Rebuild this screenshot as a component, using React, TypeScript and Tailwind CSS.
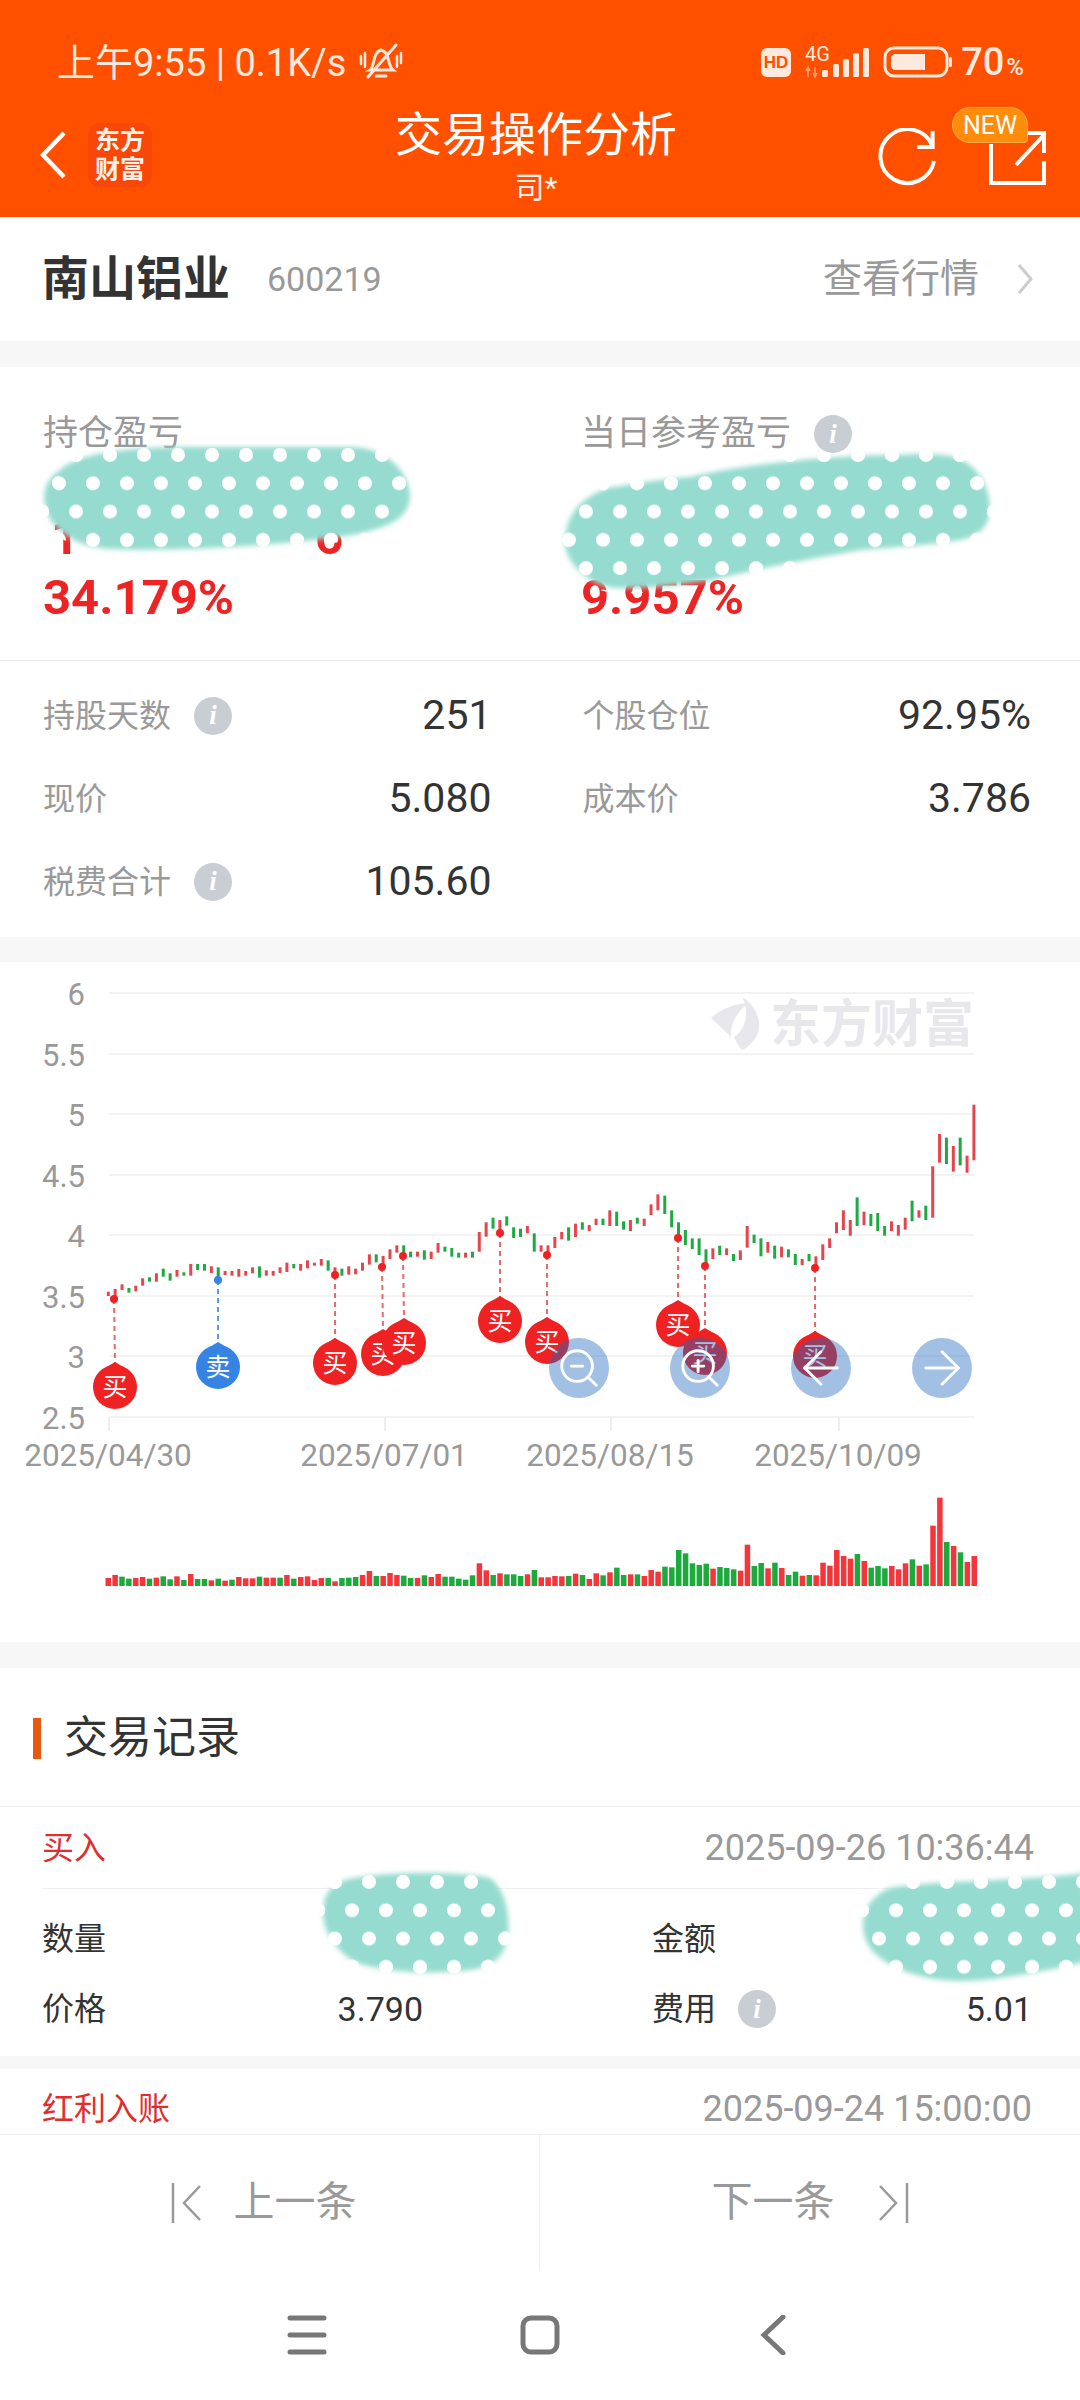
import { ArrowLeft, ArrowRight, ZoomIn, ZoomOut } from 'lucide-react';

type Candle = { up: boolean; top: number; bottom: number };

// candle rows read off the chart: r/g + top-bottom, relative to a base y
const parseCandles = (raw: string, base: number): Candle[] =>
  raw.trim().split(/\s+/).map(item => {
    const [top, bottom] = item.slice(1).split('-').map(Number);
    return { up: item[0] === 'r', top: base + top / 3, bottom: base + bottom / 3 };
  });

const candles: Candle[] = [
  ...parseCandles(
    `r305-318 r297-325 r283-300 g294-308 r287-304 r265-287 g262-275 r250-275 g236-260 g250-272
     r240-260 g247-257 r222-257 g222-240 g222-242 r229-249 g232-262 r243-255 r243-257 r237-260
     r243-257 r232-250 g229-263 r241-257 r243-257 r232-249 r218-246 g222-235 r222-242 r211-235
     r218-227 r207-227 g211-242 r232-262 g236-257 r229-254 r236-253 r218-242 r193-224 g193-217`,
    1190,
  ),
  ...parseCandles(
    `r258-290 r238-267 r226-248 g226-258 g245-262 r245-260 g241-269 r245-267 r219-248 g230-245
     g234-260 g248-263 r248-263 g245-263 r186-245 r157-200 g143-176 r150-190 g139-167 g172-204
     g176-201 r168-190 g190-245 r226-245 r226-255 r201-234 r186-208 g172-212 r161-201 g157-179
     r165-183 r146-165 g146-165 r121-168 g125-168 g154-179 r150-183 g143-161 r146-168 r103-135
     r73-121 g77-132 g121-172 g157-200`,
    1170,
  ),
  ...parseCandles(
    `g420-465 g445-477 g445-495 g478-525 r475-507 g467-495 r475-495 g492-513 r481-510 r408-473
     g434-459 g445-499 r456-488 g467-506 r470-502 g478-502 g492-525 r507-525 g492-514 r499-535
     r463-510 r445-474 r397-430 r361-420 r390-437 g322-408 r365-405 g372-408 g369-423 g408-437
     r394-423 r405-437 r383-419 g332-394 r361-383 g347-390 r229-383 r132-218 g143-222 r168-245
     g143-226 r197-248 r44-211`,
    1090,
  ),
];

const volumes = `r354 r345 g350 g356 r354 r351 g356 r353 g349 g358 r349 g360 r342 g357 g357 r361 g356 r362 g359 r351
  r355 r355 g350 r353 r353 g353 r345 g356 r351 r349 r360 r354 g354 r364 g354 g353 g351 r345 r333 g348
  r348 r339 r345 g347 g354 r354 g346 r351 r342 g350 g350 g356 g359 g346 r310 r331 g345 r340 g343 g343
  g348 r343 g330 r352 r352 r348 r349 g348 r341 g345 r357 r340 g346 r337 g323 g345 r343 g343 r348 r330
  r335 g320 g322 g270 g280 g310 g315 g311 r326 g321 g324 g328 r332 r254 g318 g309 r325 g308 r324 g345
  g335 r347 g345 r346 r308 r317 r270 r288 r296 g282 r303 g323 g318 g325 r318 r328 r310 g298 r317 g313
  r197 r113 g246 r258 g277 r306 r288`
  .trim()
  .split(/\s+/)
  .map(item => ({ up: item[0] === 'r', top: 1460 + Number(item.slice(1)) / 3 }));

const gridLines = [
  { label: '6', y: 993 },
  { label: '5.5', y: 1054 },
  { label: '5', y: 1114 },
  { label: '4.5', y: 1175 },
  { label: '4', y: 1235 },
  { label: '3.5', y: 1296 },
  { label: '3', y: 1356 },
  { label: '2.5', y: 1417 },
];

const dateTicks = [
  { label: '2025/04/30', x: 108 },
  { label: '2025/07/01', x: 384 },
  { label: '2025/08/15', x: 610 },
  { label: '2025/10/09', x: 838 },
];

const trades = [
  { x: 114, dotY: 1299, ballX: 115, ballY: 1387, sell: false },
  { x: 218, dotY: 1280, ballX: 218, ballY: 1367, sell: true },
  { x: 335, dotY: 1275, ballX: 335, ballY: 1363, sell: false },
  { x: 382, dotY: 1267, ballX: 383, ballY: 1354, sell: false },
  { x: 403, dotY: 1256, ballX: 404, ballY: 1343, sell: false },
  { x: 500, dotY: 1233, ballX: 500, ballY: 1321, sell: false },
  { x: 547, dotY: 1255, ballX: 547, ballY: 1342, sell: false },
  { x: 678, dotY: 1238, ballX: 678, ballY: 1325, sell: false },
  { x: 705, dotY: 1266, ballX: 705, ballY: 1353, sell: false },
  { x: 815, dotY: 1268, ballX: 815, ballY: 1356, sell: false },
];

const scribbles = [
  {
    pattern: 'dotsTop',
    d: 'M60 470C80 452 130 447 200 447L350 447C385 447 408 470 410 495C410 520 385 530 340 537C280 545 180 552 110 549C80 547 58 535 48 515C40 495 45 480 60 470Z',
  },
  {
    pattern: 'dotsTop',
    d: 'M607 488C640 483 670 478 690 477C720 470 760 464 793 461C830 457 870 455 897 455C930 453 955 454 965 462C982 472 990 490 990 511C988 528 978 536 960 540C925 546 890 547 862 550C825 556 790 563 759 569C725 578 690 585 655 587C630 589 605 590 593 581C575 570 564 555 565 540C566 520 575 500 607 488Z',
  },
  {
    pattern: 'dotsBottom',
    d: 'M345 1880C380 1871 460 1871 490 1878C507 1890 510 1920 508 1935C506 1955 495 1966 470 1970C430 1975 380 1972 355 1962C335 1950 322 1930 323 1910C324 1895 330 1885 345 1880Z',
  },
  {
    pattern: 'dotsBottom',
    d: 'M890 1888C930 1880 1020 1882 1085 1873L1085 1962C1040 1972 1000 1980 965 1981C920 1982 880 1965 868 1945C858 1925 862 1900 890 1888Z',
  },
];

function InfoDot() {
  return (
    <span className="w-[38px] h-[38px] rounded-full bg-[#C9CDD4] text-white flex items-center justify-center font-['Liberation_Serif',serif] italic font-bold text-[27px] leading-none shrink-0">
      i
    </span>
  );
}

function StatCell({ label, value, info }: { label: string; value: string; info?: boolean }) {
  return (
    <div className="h-[83px] flex items-center justify-between">
      <div className="flex items-center gap-[23px] text-[32px] text-[#999999]">
        {label}
        {info && <InfoDot />}
      </div>
      <span className="text-[41px] text-[#333333]">{value}</span>
    </div>
  );
}

function StatusBar() {
  return (
    <div className="h-[44px] flex items-center justify-between pl-[57px] pr-[56px] text-[#FDE9DE]">
      <div className="flex items-center">
        <span className="text-[38px] leading-none mt-[1px]">上午9:55 | 0.1K/s</span>
        <svg width="46" height="38" viewBox="0 0 46 38" fill="none" stroke="currentColor" strokeWidth="3" strokeLinecap="round" className="ml-[12px]">
          <path d="M12 27C17 24 14 10 23 7C32 9 29 22 35 27Z" />
          <path d="M18 33H28" />
          <path d="M38 2L10 34" />
          <path d="M3 13V21M7 10V24M39 13V24M43 10V20" strokeWidth="2.5" />
        </svg>
      </div>
      <div className="flex items-center">
        <span className="w-[30px] h-[29px] rounded-[6px] bg-[#FDE9DE] text-[#FF5000] text-[17px] font-bold leading-none flex items-center justify-center font-['Liberation_Sans',sans-serif]">
          HD
        </span>
        <svg width="66" height="34" viewBox="0 0 66 34" className="ml-[14px]">
          <text x="0" y="16" fontSize="20" fill="#FDE9DE" fontFamily="Roboto, sans-serif">4G</text>
          <path d="M3 22V32M1 26L3 22L5 26M10 22V32M8 28L10 32L12 28" stroke="#FF9C70" strokeWidth="1.6" fill="none" />
          <g fill="#FDE9DE">
            <rect x="17" y="25" width="6" height="7" rx="1.5" />
            <rect x="28" y="19" width="6" height="13" rx="1.5" />
            <rect x="38" y="14" width="6" height="18" rx="1.5" />
            <rect x="48" y="8" width="6" height="24" rx="1.5" />
            <rect x="58" y="3" width="6" height="29" rx="1.5" />
          </g>
        </svg>
        <svg width="70" height="32" viewBox="0 0 70 32" className="ml-[12px]">
          <rect x="2" y="2" width="62" height="28" rx="9" fill="none" stroke="#FDE9DE" strokeWidth="3" />
          <path d="M13 8H42V24H13C10 24 8 22 8 19V13C8 10 10 8 13 8Z" fill="#FDE9DE" />
          <rect x="66" y="11" width="3" height="10" rx="1.5" fill="#FDE9DE" />
        </svg>
        <span className="text-[38px] leading-none ml-[8px] font-medium">70</span>
        <span className="text-[24px] leading-none ml-[2px] mt-[10px] font-medium">%</span>
      </div>
    </div>
  );
}

function NavBar() {
  return (
    <div className="h-[133px] flex">
      <div className="w-[256px] h-[64px] mt-[39px] pl-[40px] flex items-center gap-[22px]">
        <svg width="26" height="48" viewBox="0 0 26 48" fill="none" stroke="white" strokeWidth="4.5">
          <path d="M24 2L3 24L24 46" />
        </svg>
        <div className="w-[64px] h-[64px] rounded-[12px] bg-[#F7480A] text-[#FFF1E8] text-[25px] font-bold leading-[29px] text-center flex items-center justify-center">
          东方<br />财富
        </div>
      </div>
      <div className="flex-1 pt-[24px] flex flex-col items-center text-white">
        <span className="text-[47px] leading-[54px]">交易操作分析</span>
        <span className="text-[30px] leading-[40px] mt-[6px] text-[#FFF1E8]">司*</span>
      </div>
      <div className="w-[264px] mt-[44px] flex justify-end pr-[33px] gap-[52px]">
        <svg width="60" height="60" viewBox="0 0 60 60" fill="none" stroke="white" strokeWidth="4">
          <path d="M55.6 18.3A27 27 0 1 0 57 33" />
          <path d="M55.6 3V19H40" />
        </svg>
        <div className="relative w-[58px] h-[58px]">
          <svg width="58" height="58" viewBox="0 0 58 58" fill="none" stroke="white" strokeWidth="4" className="mt-[1px]">
            <path d="M2 15V54H55V32" />
            <path d="M27 36L55 6" />
            <path d="M36 4H55V24" />
          </svg>
          <span className="absolute left-[-37px] top-[-21px] w-[76px] h-[36px] rounded-tl-[18px] rounded-tr-[18px] rounded-bl-[18px] rounded-br-[4px] border border-[#FFB04D] bg-[#FF8C0A] text-white text-[25px] leading-none flex items-center justify-center">
            NEW
          </span>
        </div>
      </div>
    </div>
  );
}

function KlineChart() {
  const step = 6.87;
  const volStep = (971.5 - 105.5) / (volumes.length - 1);
  return (
    <svg width="1080" height="680" viewBox="0 962 1080 680" className="block" fontFamily="Roboto, 'Noto Sans CJK SC', sans-serif">
      {gridLines.map(line => (
        <g key={line.label}>
          <rect x="109" y={line.y - 1} width="865" height="2" fill="#F3F3F4" />
          <text x="85" y={line.y + 12} textAnchor="end" fontSize="31" fill="#999999">{line.label}</text>
        </g>
      ))}
      {dateTicks.map(tick => (
        <g key={tick.label}>
          <rect x={tick.x} y="1417" width="2" height="14" fill="#EEEEEE" />
          <text x={tick.x} y="1466" textAnchor="middle" fontSize="31.5" fill="#999999">{tick.label}</text>
        </g>
      ))}

      <g fill="#E8E8EC">
        <path d="M711 1018C722 1008 735 1004 748 1003C738 1012 730 1022 731 1037C722 1028 716 1023 711 1018Z" />
        <path d="M742 997C756 1005 763 1022 757 1035C753 1043 747 1048 742 1050C738 1045 735 1040 734 1037C746 1030 750 1010 742 997Z" />
        <text x="770" y="1042" fontSize="51" fontWeight="700">东方财富</text>
      </g>

      {candles.map((c, i) => (
        <rect
          key={i}
          x={108.3 + i * step - 1.5}
          y={c.top}
          width="3"
          height={c.bottom - c.top}
          fill={c.up ? '#E4464E' : '#1DAA42'}
        />
      ))}

      {trades.map(t => {
        const color = t.sell ? '#3584E4' : '#EE2222';
        return (
          <g key={t.x}>
            <line
              x1={t.x}
              y1={t.dotY}
              x2={t.ballX}
              y2={t.ballY - 24}
              stroke={t.sell ? '#5C9BE8' : '#E96A6A'}
              strokeWidth="2"
              strokeDasharray="5 4"
            />
            <circle cx={t.x} cy={t.dotY} r="4" fill={color} />
            <path d={`M${t.ballX - 10} ${t.ballY - 19}L${t.ballX} ${t.ballY - 25}L${t.ballX + 10} ${t.ballY - 19}Z`} fill={color} />
            <circle cx={t.ballX} cy={t.ballY} r="22" fill={color} />
            <text x={t.ballX} y={t.ballY + 9} textAnchor="middle" fontSize="25" fill="white">
              {t.sell ? '卖' : '买'}
            </text>
          </g>
        );
      })}

      {volumes.map((v, i) => (
        <rect
          key={i}
          x={105.5 + i * volStep}
          y={v.top}
          width="5.5"
          height={1586 - v.top}
          fill={v.up ? '#F4363C' : '#1CAA3C'}
        />
      ))}
    </svg>
  );
}

function ChartButton({ className, children }: { className: string; children: React.ReactNode }) {
  return (
    <div className={`absolute top-[376px] w-[60px] h-[60px] rounded-full bg-[rgba(31,105,188,0.42)] text-white flex items-center justify-center ${className}`}>
      {children}
    </div>
  );
}

function Scribbles() {
  return (
    <svg width="1080" height="2400" viewBox="0 0 1080 2400" className="absolute inset-0 pointer-events-none">
      <defs>
        <filter id="soft" x="-10%" y="-10%" width="120%" height="120%">
          <feGaussianBlur stdDeviation="2.5" />
        </filter>
        <pattern id="dotsTop" width="34" height="56.6" patternUnits="userSpaceOnUse" patternTransform="translate(68 447)">
          <circle cx="8" cy="8" r="7" fill="white" />
          <circle cx="25" cy="36.3" r="7" fill="white" />
        </pattern>
        <pattern id="dotsBottom" width="34" height="56.6" patternUnits="userSpaceOnUse" patternTransform="translate(361 1874)">
          <circle cx="8" cy="8" r="7" fill="white" />
          <circle cx="25" cy="36.3" r="7" fill="white" />
        </pattern>
      </defs>
      {scribbles.map((s, i) => (
        <g key={i}>
          <path d={s.d} fill="#95DBCF" filter="url(#soft)" />
          <path d={s.d} fill={`url(#${s.pattern})`} stroke={`url(#${s.pattern})`} strokeWidth="10" />
        </g>
      ))}
    </svg>
  );
}

export default function App() {
  return (
    <div className="relative w-[1080px] h-[2400px] overflow-hidden bg-white font-[Roboto,'Noto_Sans_CJK_SC',sans-serif]">
      <header className="h-[217px] pt-[40px] bg-[#FF5000]">
        <StatusBar />
        <NavBar />
      </header>

      <div className="h-[124px] pl-[42px] pr-[47px] flex items-center justify-between">
        <div className="flex items-center gap-[37px]">
          <h1 className="text-[47px] font-bold text-[#333333]">南山铝业</h1>
          <span className="text-[34px] text-[#999999]">600219</span>
        </div>
        <div className="flex items-center gap-[38px] text-[39px] text-[#999999]">
          查看行情
          <svg width="16" height="32" viewBox="0 0 16 32" fill="none" stroke="#CCCCCC" strokeWidth="3">
            <path d="M2 2L14 16L2 30" />
          </svg>
        </div>
      </div>

      <div className="h-[26px] bg-[#F7F7F7]" />

      <section className="h-[293px] pt-[44px] pl-[43px] grid grid-cols-[538px_1fr]">
        <div>
          <div className="h-[44px] mt-[1px] flex items-center text-[35px] text-[#999999]">持仓盈亏</div>
          <div className="h-[114px] w-[300px] pb-[8px] flex items-end justify-between pl-[8px] text-[49px] leading-none font-bold text-[#EE2424]">
            <span>1</span>
            <span>6</span>
          </div>
          <div className="h-[56px] flex items-center text-[49px] font-bold text-[#EE2424]">34.179%</div>
        </div>
        <div>
          <div className="h-[44px] mt-[1px] flex items-center gap-[23px] text-[35px] text-[#999999]">
            当日参考盈亏
            <InfoDot />
          </div>
          <div className="h-[114px]" />
          <div className="h-[56px] flex items-center text-[49px] font-bold text-[#EE2424]">9.957%</div>
        </div>
      </section>

      <div className="h-px bg-[#EEEEEE]" />

      <section className="h-[276px] pt-[13px] pl-[43px] pr-[49px] grid grid-cols-2 gap-x-[91px] content-start">
        <StatCell label="持股天数" value="251" info />
        <StatCell label="个股仓位" value="92.95%" />
        <StatCell label="现价" value="5.080" />
        <StatCell label="成本价" value="3.786" />
        <StatCell label="税费合计" value="105.60" info />
      </section>

      <div className="h-[25px] bg-[#F7F7F7]" />

      <section className="relative h-[680px]">
        <KlineChart />
        <ChartButton className="left-[549px]"><ZoomOut size={46} strokeWidth={1.5} /></ChartButton>
        <ChartButton className="left-[670px]"><ZoomIn size={46} strokeWidth={1.5} /></ChartButton>
        <ChartButton className="left-[791px]"><ArrowLeft size={56} strokeWidth={1.2} /></ChartButton>
        <ChartButton className="left-[912px]"><ArrowRight size={56} strokeWidth={1.2} /></ChartButton>
      </section>

      <div className="h-[26px] bg-[#F7F7F7]" />

      <section>
        <div className="h-[139px] pt-[2px] flex items-center border-b border-[#EEEEEE] pl-[33px]">
          <span className="w-[8px] h-[41px] bg-[#E8590F] mr-[23px]" />
          <h2 className="text-[44px] text-[#333333]">交易记录</h2>
        </div>

        <div className="ml-[42px] h-[82px] pr-[46px] flex items-center justify-between border-b border-[#EEEEEE]">
          <span className="text-[32px] text-[#E02E2E]">买入</span>
          <span className="text-[36px] text-[#999999]">2025-09-26 10:36:44</span>
        </div>

        <div className="h-[167px] pt-[15px] pl-[42px] pr-[48px] grid grid-cols-[381px_1fr] gap-x-[229px] content-start text-[32px] text-[#333333]">
          <div className="h-[70px] flex items-center">数量</div>
          <div className="h-[70px] flex items-center">金额</div>
          <div className="h-[70px] flex items-center justify-between">
            价格
            <span className="text-[34px]">3.790</span>
          </div>
          <div className="h-[70px] flex items-center justify-between">
            <span className="flex items-center gap-[22px]">费用<InfoDot /></span>
            <span className="text-[34px]">5.01</span>
          </div>
        </div>

        <div className="h-[13px] bg-[#F7F7F7]" />

        <div className="h-[65px] pt-[14px] pl-[42px] pr-[48px] flex items-center justify-between">
          <span className="text-[32px] text-[#E02E2E]">红利入账</span>
          <span className="text-[36px] text-[#999999]">2025-09-24 15:00:00</span>
        </div>
      </section>

      <div className="h-[136px] border-t border-[#EEEEEE] grid grid-cols-2 text-[41px] text-[#999999]">
        <div className="flex items-center justify-center gap-[33px] pr-[12px] border-r border-[#EEEEEE]">
          <svg width="30" height="40" viewBox="0 0 30 40" fill="none" stroke="#999999" strokeWidth="2.5">
            <path d="M2 0V40" />
            <path d="M29 3L13 20L29 37" />
          </svg>
          上一条
        </div>
        <div className="flex items-center justify-center gap-[44px]">
          下一条
          <svg width="30" height="40" viewBox="0 0 30 40" fill="none" stroke="#999999" strokeWidth="2.5">
            <path d="M28 0V40" />
            <path d="M1 3L17 20L1 37" />
          </svg>
        </div>
      </div>

      <nav className="h-[130px] flex items-center justify-center gap-[193px]">
        <svg width="40" height="40" viewBox="0 0 40 40" fill="none" stroke="#777777" strokeWidth="5" strokeLinecap="round">
          <path d="M3 3H37M3 20H37M3 37H37" />
        </svg>
        <svg width="40" height="40" viewBox="0 0 40 40" fill="none" stroke="#777777" strokeWidth="5">
          <rect x="3" y="3" width="34" height="34" rx="8" />
        </svg>
        <svg width="40" height="40" viewBox="0 0 40 40" fill="none" stroke="#777777" strokeWidth="5" strokeLinecap="round">
          <path d="M30 2L11 20L30 38" />
        </svg>
      </nav>

      <Scribbles />
    </div>
  );
}
